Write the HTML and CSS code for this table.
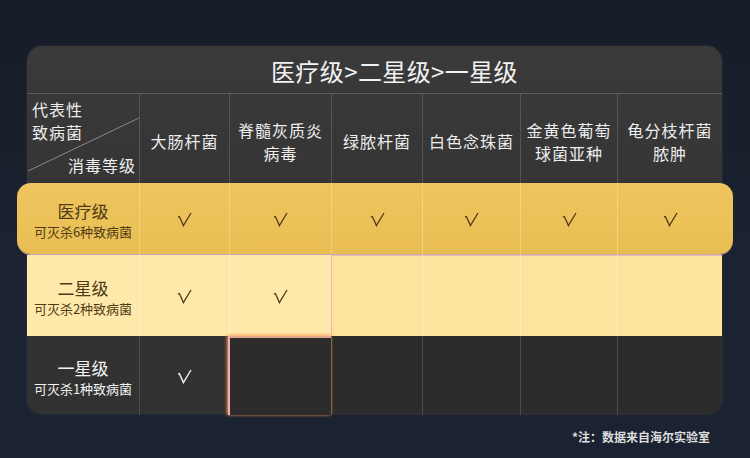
FILE: index.html
```html
<!DOCTYPE html>
<html lang="zh-CN">
<head>
<meta charset="utf-8">
<link rel="stylesheet" href="styles.css">
</head>
<body>
<div class="page">
  <div class="card">
    <div class="title">医疗级&gt;二星级&gt;一星级</div>
    <div class="row head">
      <div class="cell corner">
        <svg class="diag" width="112" height="89" viewBox="0 0 112 89"><line x1="1" y1="77" x2="112" y2="24" stroke="#8a8a8a" stroke-width="1"/></svg>
        <div class="corner-top">代表性<br>致病菌</div>
        <div class="corner-bot">消毒等级</div>
      </div>
      <div class="cell hc">大肠杆菌</div>
      <div class="cell hc">脊髓灰质炎<br>病毒</div>
      <div class="cell hc">绿脓杆菌</div>
      <div class="cell hc">白色念珠菌</div>
      <div class="cell hc">金黄色葡萄<br>球菌亚种</div>
      <div class="cell hc">龟分枝杆菌<br>脓肿</div>
    </div>
    <div class="row r1">
      <div class="cell label"><span class="lv">医疗级</span><span class="sub">可灭杀6种致病菌</span></div>
      <div class="cell ck"><svg class="tick" width="15" height="15" viewBox="0 0 15 15"><path d="M1 5.2 L2.4 4.6 L6.4 13.6 L14 1" fill="none" stroke="currentColor" stroke-width="1.3"/></svg></div>
      <div class="cell ck"><svg class="tick" width="15" height="15" viewBox="0 0 15 15"><path d="M1 5.2 L2.4 4.6 L6.4 13.6 L14 1" fill="none" stroke="currentColor" stroke-width="1.3"/></svg></div>
      <div class="cell ck"><svg class="tick" width="15" height="15" viewBox="0 0 15 15"><path d="M1 5.2 L2.4 4.6 L6.4 13.6 L14 1" fill="none" stroke="currentColor" stroke-width="1.3"/></svg></div>
      <div class="cell ck"><svg class="tick" width="15" height="15" viewBox="0 0 15 15"><path d="M1 5.2 L2.4 4.6 L6.4 13.6 L14 1" fill="none" stroke="currentColor" stroke-width="1.3"/></svg></div>
      <div class="cell ck"><svg class="tick" width="15" height="15" viewBox="0 0 15 15"><path d="M1 5.2 L2.4 4.6 L6.4 13.6 L14 1" fill="none" stroke="currentColor" stroke-width="1.3"/></svg></div>
      <div class="cell ck"><svg class="tick" width="15" height="15" viewBox="0 0 15 15"><path d="M1 5.2 L2.4 4.6 L6.4 13.6 L14 1" fill="none" stroke="currentColor" stroke-width="1.3"/></svg></div>
    </div>
    <div class="row r2">
      <div class="cell label lit"><span class="lv">二星级</span><span class="sub">可灭杀2种致病菌</span></div>
      <div class="cell ck lit"><svg class="tick" width="15" height="15" viewBox="0 0 15 15"><path d="M1 5.2 L2.4 4.6 L6.4 13.6 L14 1" fill="none" stroke="currentColor" stroke-width="1.3"/></svg></div>
      <div class="cell ck lit"><svg class="tick" width="15" height="15" viewBox="0 0 15 15"><path d="M1 5.2 L2.4 4.6 L6.4 13.6 L14 1" fill="none" stroke="currentColor" stroke-width="1.3"/></svg></div>
      <div class="cell off first"></div>
      <div class="cell off"></div>
      <div class="cell off"></div>
      <div class="cell off"></div>
    </div>
    <div class="row r3">
      <div class="cell label"><span class="lv">一星级</span><span class="sub">可灭杀1种致病菌</span></div>
      <div class="cell ck"><svg class="tick" width="15" height="15" viewBox="0 0 15 15"><path d="M1 5.2 L2.4 4.6 L6.4 13.6 L14 1" fill="none" stroke="currentColor" stroke-width="1.4"/></svg></div>
      <div class="cell off first"></div>
      <div class="cell off"></div>
      <div class="cell off"></div>
      <div class="cell off"></div>
      <div class="cell off"></div>
    </div>
  </div>
  <div class="note">*注：数据来自海尔实验室</div>
</div>
</body>
</html>
```
FILE: styles.css
```css
html, body {
  margin: 0;
  padding: 0;
}
body {
  width: 750px;
  height: 458px;
  overflow: hidden;
  background: linear-gradient(180deg, #161c27 0%, #1c2331 60%, #1b2231 100%);
  font-family: "Noto Sans CJK SC", "Noto Sans", sans-serif;
}
.page {
  padding: 46px 28px 0 27px;
}
.card {
  width: 695px;
  height: 368px;
  background: linear-gradient(180deg, #3a3a3a 0%, #353535 40%, #313131 100%);
  border-radius: 15px;
  box-shadow: 0 0 0 1px rgba(255,255,255,0.04);
}
.title {
  border-bottom: 1px solid #5c5c5c;
  display: flex;
  align-items: center;
  justify-content: center;
  padding-left: 40px;
  padding-top: 2px;
  box-sizing: border-box;
  height: 48px;
  color: #f2f2f2;
  font-size: 24px;
  font-weight: 400;
  letter-spacing: 0.4px;
}
.row {
  display: grid;
  grid-template-columns: 112px 90px 102px 91px 98px 97px 105px;
}
.cell {
  border-left: 1px solid #555;
  display: flex;
  align-items: center;
  justify-content: center;
  text-align: center;
  box-sizing: border-box;
}
.cell:first-child {
  border-left: none;
}
.head {
  height: 89px;
}
.hc {
  color: #eeeeee;
  font-size: 16px;
  line-height: 23px;
  letter-spacing: 1px;
  padding-top: 6px;
}
.corner {
  position: relative;
  flex-direction: column;
  align-items: stretch;
  justify-content: space-between;
  padding: 4px 3px 6px 5px;
  color: #eeeeee;
  font-size: 16px;
  line-height: 23px;
  letter-spacing: 1px;
  text-align: left;
}
.diag {
  position: absolute;
  left: 0;
  top: 0;
}
.corner-bot {
  text-align: right;
}
.r1 {
  height: 71px;
  margin: 0 -11px 0 -10px;
  padding: 0 11px 0 10px;
  background: linear-gradient(180deg, #eec55e 0%, #ebc158 60%, #e9bd52 100%);
  border-radius: 14px;
  box-shadow: 0 1px 0 rgba(255, 225, 235, 0.7);
  position: relative;
}
.r1 .cell {
  border-left-color: rgba(255, 240, 200, 0.35);
}
.r1 .cell:first-child {
  border-left: none;
}
.label {
  flex-direction: column;
  padding-top: 3px;
}
.lv {
  font-size: 17px;
  line-height: 23px;
}
.sub {
  font-size: 13px;
  line-height: 19px;
}
.r1 .label, .r1 .ck, .r2 .label, .r2 .ck {
  color: #4e3b15;
}
.ck {
  padding-top: 2px;
}
.tick {
  display: block;
}
.r2 {
  height: 81px;
  background: #fde49d;
  margin-top: 1px;
}
.r2 .cell {
  border-left-color: rgba(255, 248, 225, 0.6);
}
.r2 .cell.lit {
  background: #fee9ab;
}
.r2 .cell:first-child {
  border-left: none;
}
.r2 .off {
  background: #fde39b;
  box-shadow: inset 0 1px 0 #f2b8b6;
}
.r2 .off.first {
  border-left: 1px solid #f0b3b4;
}
.r3 {
  height: 79px;
  border-radius: 0 0 15px 15px;
}
.r3 .label, .r3 .ck {
  color: #f3f3f3;
}
.r3 .cell {
  border-left-color: #4c4c4c;
}
.r3 .cell:first-child {
  border-left: none;
}
.r3 .off {
  background: #2c2c2c;
}
.r3 .off:last-child {
  border-radius: 0 0 15px 0;
}
.r3 .off.first {
  border-left: 2px solid #eab0b4;
  box-shadow: inset 0 2px 0 #e6a88a, -1px 0 3px rgba(255, 150, 80, 0.8), 0 -1px 3px rgba(255, 150, 80, 0.6);
  position: relative;
  margin-left: -1px;
}
.note {
  width: 683px;
  text-align: right;
  margin-top: 14px;
  font-size: 12px;
  line-height: 18px;
  font-weight: 700;
  color: #dedede;
}
```
